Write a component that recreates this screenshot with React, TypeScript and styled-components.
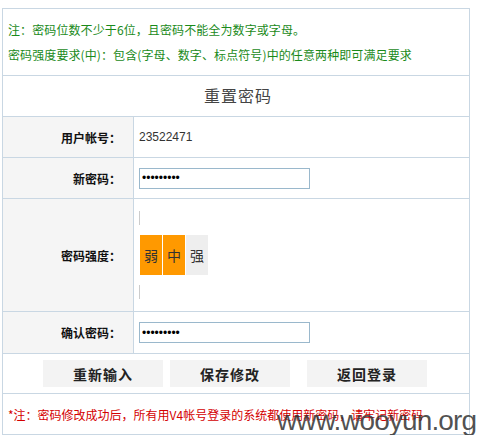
import React from 'react';
import styled, { createGlobalStyle } from 'styled-components';

const GlobalStyle = createGlobalStyle`
	body {
		margin: 0;
		background: #fff;
		font-family: "Liberation Sans", "Noto Sans CJK SC", sans-serif;
		font-size: 12px;
	}
`;

const line = '#c9d7e3';

const Page = styled.div`
	padding: 8px 0 0 2px;
`;

const Box = styled.div`
	position: relative;
	width: 466px;
	border: 1px solid ${line};
	background: #fff;
`;

const Row = styled.div<{ $h: number }>`
	display: flex;
	height: ${(p) => p.$h}px;
	border-top: 1px solid ${line};
	&:first-child {
		border-top: none;
	}
`;

const Notes = styled.div`
	display: flex;
	flex-direction: column;
	justify-content: center;
	gap: 9px;
	padding-left: 5px;
	color: #1a8a1a;
	font-size: 12px;
	line-height: 16px;
	letter-spacing: 0.1px;
	font-family: "Noto Sans CJK SC", sans-serif;
`;

const Title = styled.div`
	flex: 1;
	display: flex;
	align-items: center;
	justify-content: center;
	padding: 0 0 3px 4px;
	font-size: 16px;
	color: #444;
	letter-spacing: 1px;
	font-family: "Noto Sans CJK SC", sans-serif;
`;

const Label = styled.div`
	width: 118px;
	flex: none;
	display: flex;
	align-items: center;
	justify-content: flex-end;
	padding-right: 12px;
	background: #f5f5f5;
	border-right: 1px solid ${line};
	font-weight: bold;
	font-size: 12px;
	color: #111;
	font-family: "Noto Sans CJK SC", sans-serif;
`;

const Value = styled.div`
	flex: 1;
	display: flex;
	align-items: center;
	padding-left: 5px;
	color: #333;
	font-size: 12px;
`;

const PwInput = styled.input`
	width: 165px;
	height: 19px;
	padding: 0 2px;
	margin: 0;
	border: 1px solid #9ab8cc;
	font-size: 12px;
	color: #000;
	outline: none;
	box-sizing: content-box;
`;

const Strength = styled.div`
	display: flex;
	flex-direction: column;
	align-items: flex-start;
	gap: 10px;
`;

const Tick = styled.div`
	width: 1px;
	height: 14px;
	background: #ccc;
`;

const Bars = styled.div`
	display: flex;
	gap: 1px;
	margin-left: 1px;
`;

const Bar = styled.div<{ $on: boolean }>`
	width: 22px;
	height: 40px;
	display: flex;
	align-items: center;
	justify-content: center;
	background: ${(p) => (p.$on ? '#ff9900' : '#eeeeee')};
	color: #333;
	font-size: 14px;
	font-family: "Noto Sans CJK SC", sans-serif;
`;

const Buttons = styled.div`
	flex: 1;
	display: flex;
	align-items: center;
`;

const Btn = styled.button<{ $ml: number }>`
	width: 120px;
	height: 27px;
	margin-left: ${(p) => p.$ml}px;
	border: none;
	background: #f3f3f3;
	font-weight: bold;
	font-size: 14px;
	letter-spacing: 1px;
	color: #222;
	font-family: "Noto Sans CJK SC", sans-serif;
	padding: 0;
`;

const Warn = styled.div`
	display: flex;
	align-items: center;
	padding-left: 5px;
	color: #d40000;
	font-size: 12px;
	font-family: "Noto Sans CJK SC", sans-serif;
`;

const Watermark = styled.div`
	position: absolute;
	left: 274px;
	bottom: -3px;
	font-family: "Liberation Sans", sans-serif;
	font-size: 28px;
	letter-spacing: -0.9px;
	color: rgba(50, 50, 50, 0.85);
	pointer-events: none;
`;

export default function App() {
	return (
		<Page>
			<GlobalStyle />
			<Box>
				<Row $h={66}>
					<Notes>
						<div>注：密码位数不少于6位，且密码不能全为数字或字母。</div>
						<div>密码强度要求(中)：包含(字母、数字、标点符号)中的任意两种即可满足要求</div>
					</Notes>
				</Row>
				<Row $h={40}>
					<Title>重置密码</Title>
				</Row>
				<Row $h={40}>
					<Label>用户帐号：</Label>
					<Value>23522471</Value>
				</Row>
				<Row $h={40}>
					<Label>新密码：</Label>
					<Value>
						<PwInput type="password" defaultValue="123456789" />
					</Value>
				</Row>
				<Row $h={112}>
					<Label>密码强度：</Label>
					<Value>
						<Strength>
							<Tick />
							<Bars>
								<Bar $on>弱</Bar>
								<Bar $on>中</Bar>
								<Bar $on={false}>强</Bar>
							</Bars>
							<Tick />
						</Strength>
					</Value>
				</Row>
				<Row $h={41}>
					<Label>确认密码：</Label>
					<Value>
						<PwInput type="password" defaultValue="123456789" />
					</Value>
				</Row>
				<Row $h={39}>
					<Buttons>
						<Btn $ml={40}>重新输入</Btn>
						<Btn $ml={7}>保存修改</Btn>
						<Btn $ml={17}>返回登录</Btn>
					</Buttons>
				</Row>
				<Row $h={40}>
					<Warn>*注：密码修改成功后，所有用V4帐号登录的系统都使用新密码，请牢记新密码</Warn>
				</Row>
				<Watermark>www.wooyun.org</Watermark>
			</Box>
		</Page>
	);
}
